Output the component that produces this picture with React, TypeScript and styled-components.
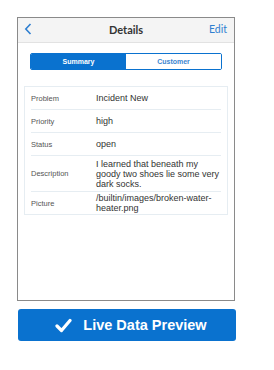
import React from "react";
import styled, { createGlobalStyle } from "styled-components";

const Global = createGlobalStyle`
  html, body { margin: 0; padding: 0; background: #fff; }
  body { font-family: "Liberation Sans", Arial, sans-serif; }
`;

const Page = styled.div`
  padding: 17px 0 0 17px;
  display: flex;
  flex-direction: column;
  gap: 8px;
  width: 220px;
`;

const Frame = styled.div`
  width: 216px;
  height: 282px;
  border: 1px solid #8a8a8a;
  display: flex;
  flex-direction: column;
  background: #fff;
`;

const Header = styled.div`
  height: 24px;
  background: #f4f4f4;
  border-bottom: 1px solid #e2e2e2;
  display: grid;
  grid-template-columns: 40px 1fr 40px;
  align-items: center;
  font-family: Lato, "Liberation Sans", sans-serif;
`;

const Back = styled.div`
  padding-left: 6px;
  padding-bottom: 2px;
  display: flex;
  align-items: center;
`;

const Title = styled.div`
  text-align: center;
  font-size: 11px;
  font-weight: bold;
  color: #333;
  padding-bottom: 2px;
`;

const EditLink = styled.div`
  text-align: right;
  padding-right: 7px;
  padding-bottom: 2px;
  font-size: 10.5px;
  color: #2f7fd0;
`;

const Body = styled.div`
  padding: 10px 6px 0 6px;
  display: flex;
  flex-direction: column;
`;

const Segments = styled.div`
  margin: 0 6px 0 6px;
  display: flex;
  height: 15px;
  border: 1px solid #0a72cf;
  border-radius: 2px;
  overflow: hidden;
`;

const Segment = styled.div<{ $active?: boolean }>`
  flex: 1;
  display: flex;
  align-items: center;
  justify-content: center;
  font-size: 7px;
  font-weight: bold;
  background: ${(p) => (p.$active ? "#0a72cf" : "#fff")};
  color: ${(p) => (p.$active ? "#fff" : "#3a85d0")};
`;

const Table = styled.div`
  margin-top: 16px;
  border: 1px solid #e6edf2;
  display: flex;
  flex-direction: column;
`;

const Row = styled.div<{ $h: number }>`
  height: ${(p) => p.$h}px;
  display: grid;
  grid-template-columns: 65px 1fr;
  align-items: center;
  border-top: 1px solid #e6edf2;
  &:first-child { border-top: none; }
  margin: 0 6px;
`;

const Label = styled.div`
  font-size: 7.5px;
  color: #555;
`;

const Value = styled.div`
  font-size: 9px;
  line-height: 10px;
  color: #333;
`;

const PreviewButton = styled.div`
  width: 218px;
  height: 32px;
  margin-left: 1px;
  padding-left: 8px;
  box-sizing: border-box;
  background: #0a72cf;
  border-radius: 3px;
  display: flex;
  align-items: center;
  justify-content: center;
  gap: 11px;
  color: #fff;
  font-size: 14.5px;
  font-weight: bold;
`;

const rows: { label: string; value: string; h: number }[] = [
  { label: "Problem", value: "Incident New", h: 22 },
  { label: "Priority", value: "high", h: 22 },
  { label: "Status", value: "open", h: 22 },
  { label: "Description", value: "I learned that beneath my goody two shoes lie some very dark socks.", h: 35 },
  { label: "Picture", value: "/builtin/images/broken-water-heater.png", h: 22 },
];

export default function App() {
  return (
    <>
      <Global />
      <Page>
        <Frame>
          <Header>
            <Back>
              <svg width="8" height="12" viewBox="0 0 8 12">
                <path d="M6.5 1 L1.8 6 L6.5 11" fill="none" stroke="#2f7fd0" strokeWidth="1.6" />
              </svg>
            </Back>
            <Title>Details</Title>
            <EditLink>Edit</EditLink>
          </Header>
          <Body>
            <Segments>
              <Segment $active>Summary</Segment>
              <Segment>Customer</Segment>
            </Segments>
            <Table>
              {rows.map((r) => (
                <Row key={r.label} $h={r.h}>
                  <Label>{r.label}</Label>
                  <Value>{r.value}</Value>
                </Row>
              ))}
            </Table>
          </Body>
        </Frame>
        <PreviewButton>
          <svg width="17" height="15" viewBox="0 0 17 15">
            <path d="M2 8 L6.5 12.5 L15 2.5" fill="none" stroke="#fff" strokeWidth="3.2" strokeLinecap="round" strokeLinejoin="round" />
          </svg>
          <span>Live Data Preview</span>
        </PreviewButton>
      </Page>
    </>
  );
}
